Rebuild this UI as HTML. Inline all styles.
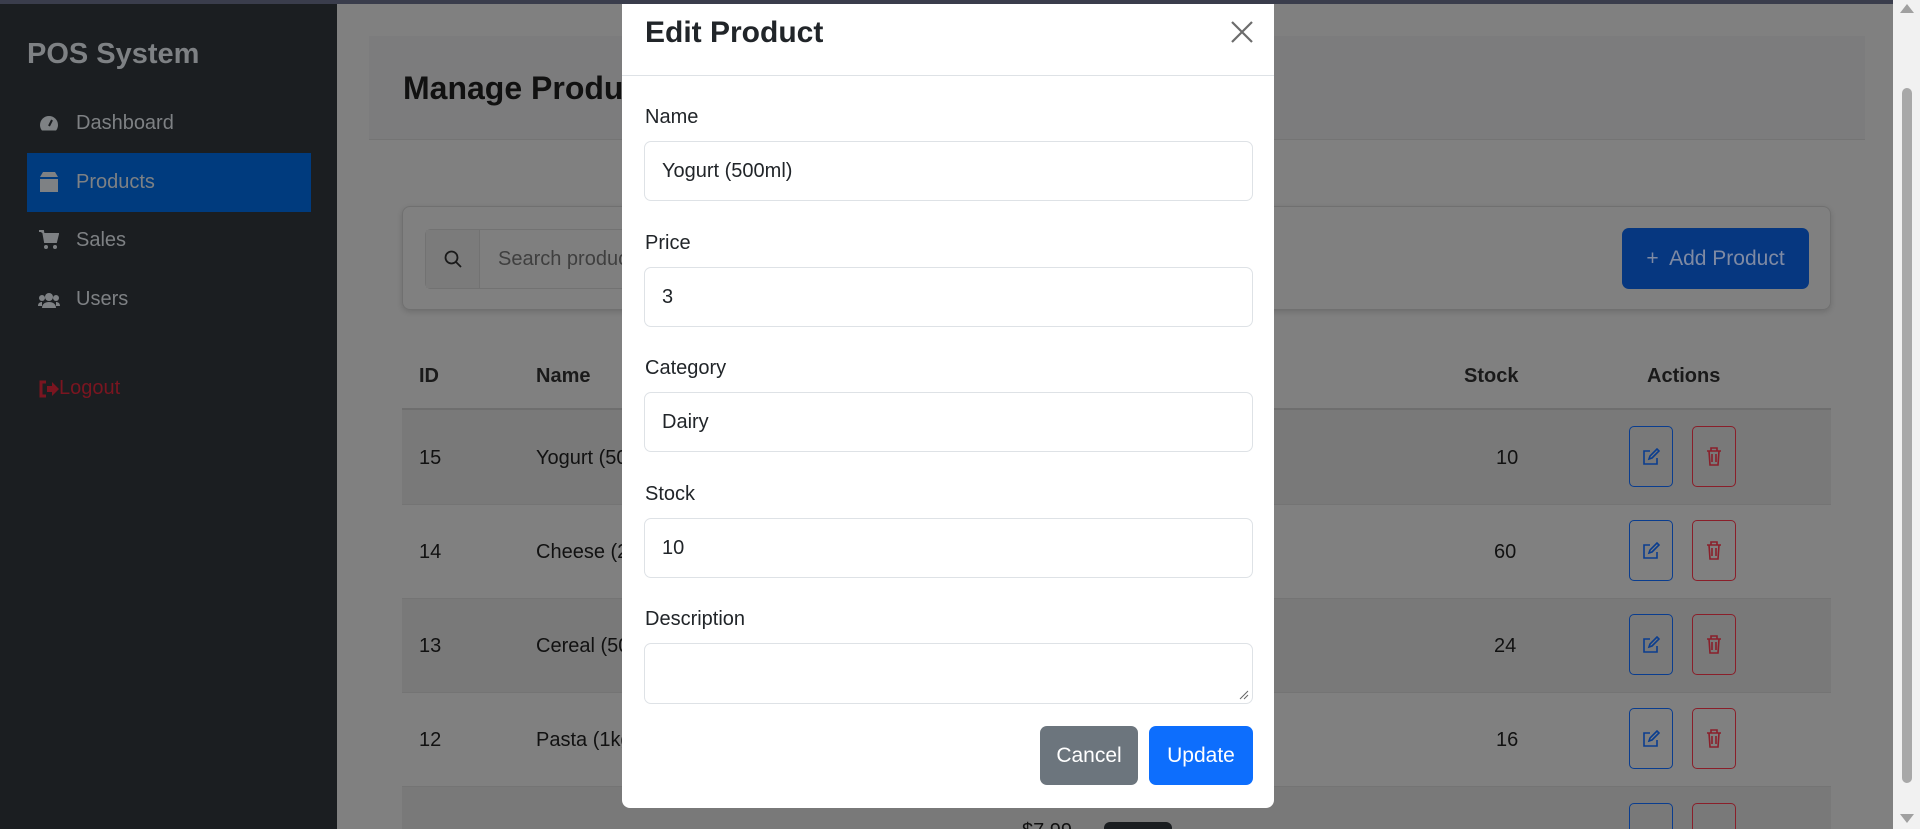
<!DOCTYPE html>
<html style="width:1920px;height:829px;overflow:hidden"><head><meta charset="utf-8"><style>
*{box-sizing:border-box;margin:0;padding:0}
body{width:1920px;height:829px;overflow:hidden;position:relative;font-family:"Liberation Sans",sans-serif;background:#808080;color:#111}
.abs{position:absolute}
.top{left:0;top:0;width:1920px;height:4px;background:#3a3d4c;z-index:5}
.side{left:0;top:4px;width:337px;height:825px;background:#1b1e21}
.side .t{left:27px;top:34px;font-size:29px;color:#7e8184;font-weight:bold}
.nav{left:40px;font-size:20px;color:#7e8184}
.act{left:27px;top:153px;width:284px;height:59px;background:#003b7e}
.sb{left:1893px;top:0;width:27px;height:829px;background:#f1f1f1;z-index:7}
.sb .thumb{position:absolute;left:9px;top:88px;width:10px;height:695px;background:#a8a8a8;border-radius:5px}
.hc{left:369px;top:36px;width:1496px;height:104px;background:#7c7c7d;border-bottom:1px solid #747474}
.hc h2{position:absolute;left:34px;top:34px;font-size:32px;font-weight:bold;color:#111;font-family:"Liberation Sans",sans-serif}
.sc{left:402px;top:206px;width:1429px;height:104px;border:1px solid #707070;border-radius:8px;box-shadow:0 2px 6px rgba(0,0,0,.15)}
.ig{left:425px;top:229px;width:300px;height:60px;border:1px solid #727272;border-radius:6px;background:#7f7f7f}
.ig .ic{position:absolute;left:0;top:0;width:54px;height:58px;border-right:1px solid #727272;background:#7b7b7b}
.addb{left:1622px;top:228px;width:187px;height:61px;background:#063780;border-radius:7px;color:#7f8aa3;font-size:21px;line-height:61px;text-align:center}
.th{top:365px;font-size:20px;font-weight:bold;color:#1a1a1a}
.row{left:402px;width:1429px;border-top:1px solid #747474}
.cell{font-size:20px;color:#111}
.eb,.db{width:44px;height:61px;border:1.5px solid #0a3d8f;border-radius:5px}
.db{border-color:#8a1f2a}
.modal{left:622px;top:4px;width:652px;height:804px;background:#fff;border-radius:0 0 8px 8px;z-index:6}
.modal .title{position:absolute;left:23px;top:12px;font-size:30px;font-weight:bold;color:#212529}
.hr{position:absolute;left:0;top:71px;width:100%;height:1px;background:#dee2e6}
.lbl{position:absolute;left:23px;font-size:20px;color:#212529}
.inp{position:absolute;left:22px;width:609px;height:60px;border:1px solid #dee2e6;border-radius:7px;font-size:20px;color:#212529;padding-left:17px;line-height:58px}
.btn{position:absolute;top:722px;height:59px;border-radius:7px;color:#fff;font-size:21px;line-height:59px;text-align:center}
#wrap{position:absolute;left:0;top:0;width:1920px;height:829px;overflow:hidden}
</style></head><body><div id="wrap">
<div class="abs top"></div>
<div class="abs side">
<div class="abs t">POS System</div>
</div>
<div class="abs act"></div>
<svg class="abs" style="left:39px;top:115px" width="20" height="18" viewBox="0 0 20 18"><path d="M10 1a9 9 0 0 0-9 9c0 2 .7 4 2 5.5h14c1.3-1.5 2-3.5 2-5.5a9 9 0 0 0-9-9z" fill="#7e8184"/><path d="M10 11l3-6" stroke="#1b1e21" stroke-width="2"/></svg>
<div class="abs nav" style="left:76px;top:112px">Dashboard</div>
<svg class="abs" style="left:39px;top:171px" width="20" height="22" viewBox="0 0 20 22"><path d="M1 6l3-5h12l3 5z" fill="#7e8184"/><rect x="1" y="8" width="18" height="13" fill="#7e8184"/></svg>
<div class="abs nav" style="left:76px;top:171px">Products</div>
<svg class="abs" style="left:39px;top:230px" width="20" height="20" viewBox="0 0 20 20"><path d="M0 1h4l2 11h11l2-8H5" fill="#7e8184" stroke="#7e8184" stroke-width="2"/><circle cx="7" cy="17" r="2" fill="#7e8184"/><circle cx="16" cy="17" r="2" fill="#7e8184"/></svg>
<div class="abs nav" style="left:76px;top:229px">Sales</div>
<svg class="abs" style="left:38px;top:292px" width="22" height="16" viewBox="0 0 22 16"><circle cx="11" cy="5" r="4" fill="#7e8184"/><circle cx="4" cy="6" r="3" fill="#7e8184"/><circle cx="18" cy="6" r="3" fill="#7e8184"/><path d="M4 16c0-4 3-6 7-6s7 2 7 6z" fill="#7e8184"/><path d="M0 14c0-3 2-4 4-4v4zM22 14c0-3-2-4-4-4v4z" fill="#7e8184"/></svg>
<div class="abs nav" style="left:76px;top:288px">Users</div>
<svg class="abs" style="left:39px;top:380px" width="20" height="18" viewBox="0 0 20 18"><path d="M7 2H2v14h5" stroke="#7a1520" stroke-width="3" fill="none"/><path d="M8 6h5V2l7 7-7 7v-4H8z" fill="#7a1520"/></svg>
<div class="abs nav" style="left:59px;top:377px;color:#7a1520">Logout</div>

<div class="abs hc"><h2>Manage Products</h2></div>
<div class="abs sc"></div>
<div class="abs ig"><div class="ic"><svg style="position:absolute;left:18px;top:20px" width="18" height="18" viewBox="0 0 18 18"><circle cx="7.5" cy="7.5" r="6" stroke="#1a1a1a" stroke-width="1.8" fill="none"/><path d="M12 12l5 5" stroke="#1a1a1a" stroke-width="1.8"/></svg></div><div style="position:absolute;left:72px;top:18px;font-size:20px;color:#3f3f3f">Search products...</div></div>
<div class="abs addb">+&nbsp; Add Product</div>

<div class="abs th" style="left:419px">ID</div>
<div class="abs th" style="left:536px">Name</div>
<div class="abs th" style="left:1464px">Stock</div>
<div class="abs th" style="left:1647px">Actions</div>
<div class="abs row" style="top:408px;height:96px;background:#797979;border-top:2px solid #6e6e6e"></div>
<div class="abs row" style="top:504px;height:94px"></div>
<div class="abs row" style="top:598px;height:94px;background:#797979"></div>
<div class="abs row" style="top:692px;height:94px"></div>
<div class="abs row" style="top:786px;height:43px;background:#797979"></div>

<div class="abs cell" style="left:419px;top:447px">15</div><div class="abs cell" style="left:536px;top:447px">Yogurt (500ml)</div><div class="abs cell" style="left:1496px;top:447px">10</div>
<div class="abs cell" style="left:419px;top:541px">14</div><div class="abs cell" style="left:536px;top:541px">Cheese (200g)</div><div class="abs cell" style="left:1494px;top:541px">60</div>
<div class="abs cell" style="left:419px;top:635px">13</div><div class="abs cell" style="left:536px;top:635px">Cereal (500g)</div><div class="abs cell" style="left:1494px;top:635px">24</div>
<div class="abs cell" style="left:419px;top:729px">12</div><div class="abs cell" style="left:536px;top:729px">Pasta (1kg)</div><div class="abs cell" style="left:1496px;top:729px">16</div>
<div class="abs cell" style="left:1022px;top:820px">$7.99</div>
<div class="abs" style="left:1104px;top:822px;width:68px;height:30px;background:#1a1d20;border-radius:6px"></div>

<div class="abs eb" style="left:1629px;top:426px"></div><div class="abs db" style="left:1692px;top:426px"></div>
<div class="abs eb" style="left:1629px;top:520px"></div><div class="abs db" style="left:1692px;top:520px"></div>
<div class="abs eb" style="left:1629px;top:614px"></div><div class="abs db" style="left:1692px;top:614px"></div>
<div class="abs eb" style="left:1629px;top:708px"></div><div class="abs db" style="left:1692px;top:708px"></div>
<div class="abs eb" style="left:1629px;top:803px"></div><div class="abs db" style="left:1692px;top:803px"></div>
<svg class="abs" style="left:1642px;top:448px" width="18" height="18" viewBox="0 0 18 18"><path d="M8 3H2v13h13v-6M7 11l1-3 7-7 2 2-7 7z" stroke="#0a3d8f" stroke-width="1.6" fill="none"/></svg>
<svg class="abs" style="left:1642px;top:542px" width="18" height="18" viewBox="0 0 18 18"><path d="M8 3H2v13h13v-6M7 11l1-3 7-7 2 2-7 7z" stroke="#0a3d8f" stroke-width="1.6" fill="none"/></svg>
<svg class="abs" style="left:1642px;top:636px" width="18" height="18" viewBox="0 0 18 18"><path d="M8 3H2v13h13v-6M7 11l1-3 7-7 2 2-7 7z" stroke="#0a3d8f" stroke-width="1.6" fill="none"/></svg>
<svg class="abs" style="left:1642px;top:730px" width="18" height="18" viewBox="0 0 18 18"><path d="M8 3H2v13h13v-6M7 11l1-3 7-7 2 2-7 7z" stroke="#0a3d8f" stroke-width="1.6" fill="none"/></svg>
<svg class="abs" style="left:1706px;top:447px" width="16" height="19" viewBox="0 0 16 19"><path d="M1 4h14M5 4V1h6v3M3 4l1 14h8l1-14M6 7v8M10 7v8" stroke="#8a1f2a" stroke-width="1.6" fill="none"/></svg>
<svg class="abs" style="left:1706px;top:541px" width="16" height="19" viewBox="0 0 16 19"><path d="M1 4h14M5 4V1h6v3M3 4l1 14h8l1-14M6 7v8M10 7v8" stroke="#8a1f2a" stroke-width="1.6" fill="none"/></svg>
<svg class="abs" style="left:1706px;top:635px" width="16" height="19" viewBox="0 0 16 19"><path d="M1 4h14M5 4V1h6v3M3 4l1 14h8l1-14M6 7v8M10 7v8" stroke="#8a1f2a" stroke-width="1.6" fill="none"/></svg>
<svg class="abs" style="left:1706px;top:729px" width="16" height="19" viewBox="0 0 16 19"><path d="M1 4h14M5 4V1h6v3M3 4l1 14h8l1-14M6 7v8M10 7v8" stroke="#8a1f2a" stroke-width="1.6" fill="none"/></svg>

<div class="abs sb"><div class="thumb"></div><div style="position:absolute;left:7px;top:4px;width:0;height:0;border-left:7px solid transparent;border-right:7px solid transparent;border-bottom:9px solid #a0a0a0"></div><div style="position:absolute;left:7px;top:814px;width:0;height:0;border-left:7px solid transparent;border-right:7px solid transparent;border-top:9px solid #a0a0a0"></div></div>

<div class="abs modal">
<div class="title">Edit Product</div>
<svg style="position:absolute;left:608px;top:16px" width="24" height="24" viewBox="0 0 24 24"><path d="M2 2l20 20M22 2L2 22" stroke="#6c6c6c" stroke-width="2.2"/></svg>
<div class="hr"></div>
<div class="lbl" style="top:102px">Name</div>
<div class="inp" style="top:137px">Yogurt (500ml)</div>
<div class="lbl" style="top:228px">Price</div>
<div class="inp" style="top:263px">3</div>
<div class="lbl" style="top:353px">Category</div>
<div class="inp" style="top:388px">Dairy</div>
<div class="lbl" style="top:479px">Stock</div>
<div class="inp" style="top:514px">10</div>
<div class="lbl" style="top:604px">Description</div>
<div class="inp" style="top:639px;height:61px"><svg style="position:absolute;right:3px;bottom:3px" width="10" height="10" viewBox="0 0 10 10"><path d="M9 1L1 9M9 5L5 9" stroke="#666" stroke-width="1"/></svg></div>
<div class="btn" style="left:418px;width:98px;background:#6c757d">Cancel</div>
<div class="btn" style="left:527px;width:104px;background:#0d6efd">Update</div>
</div>
</div></body></html>
